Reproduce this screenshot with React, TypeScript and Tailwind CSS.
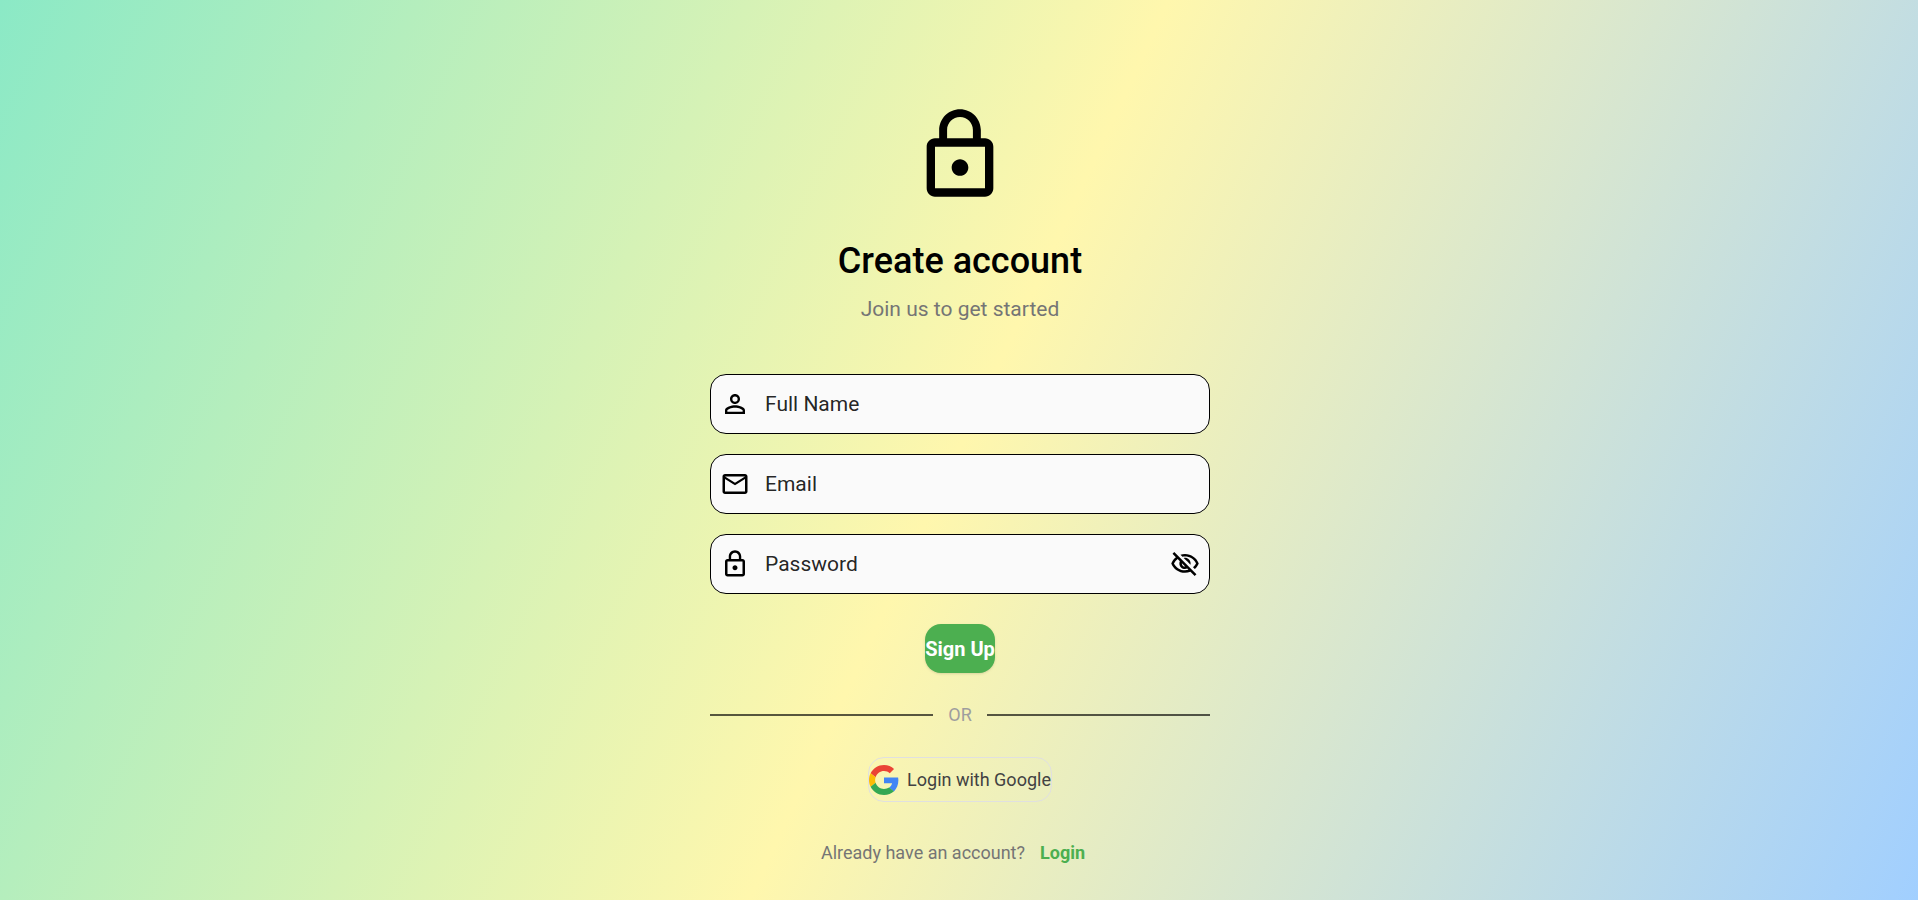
import { useState } from "react";
import type { ReactNode } from "react";

const PATHS = {
  lock: "M12 17c1.1 0 2-.9 2-2s-.9-2-2-2-2 .9-2 2 .9 2 2 2zm6-9h-1V6c0-2.76-2.24-5-5-5S7 3.24 7 6v2H6c-1.1 0-2 .9-2 2v10c0 1.1.9 2 2 2h12c1.1 0 2-.9 2-2V10c0-1.1-.9-2-2-2zM8.9 6c0-1.71 1.39-3.1 3.1-3.1s3.1 1.39 3.1 3.1v2H8.9V6zM18 20H6V10h12v10z",
  person:
    "M12 5.9a2.1 2.1 0 1 1 0 4.2 2.1 2.1 0 0 1 0-4.2m0 9c2.97 0 6.1 1.46 6.1 2.1v1.1H5.9V17c0-.64 3.13-2.1 6.1-2.1M12 4C9.79 4 8 5.79 8 8s1.79 4 4 4 4-1.79 4-4-1.79-4-4-4zm0 9c-2.67 0-8 1.34-8 4v3h16v-3c0-2.66-5.33-4-8-4z",
  mail: "M20 4H4c-1.1 0-1.99.9-1.99 2L2 18c0 1.1.9 2 2 2h16c1.1 0 2-.9 2-2V6c0-1.1-.9-2-2-2zm0 14H4V8l8 5 8-5v10zm-8-7L4 6h16l-8 5z",
  eye: "M12 4.5C7 4.5 2.73 7.61 1 12c1.73 4.39 6 7.5 11 7.5s9.27-3.11 11-7.5c-1.73-4.39-6-7.5-11-7.5zm0 13c-3.79 0-7.17-2.13-8.82-5.5C4.83 8.63 8.21 6.5 12 6.5s7.17 2.13 8.82 5.5c-1.65 3.37-5.03 5.5-8.82 5.5zm0-10c-2.48 0-4.5 2.02-4.5 4.5s2.02 4.5 4.5 4.5 4.5-2.02 4.5-4.5-2.02-4.5-4.5-4.5zm0 7c-1.38 0-2.5-1.12-2.5-2.5s1.12-2.5 2.5-2.5 2.5 1.12 2.5 2.5-1.12 2.5-2.5 2.5z",
  eyeOff:
    "M12 6c3.79 0 7.17 2.13 8.82 5.5-.59 1.22-1.42 2.27-2.41 3.12l1.41 1.41c1.39-1.23 2.49-2.77 3.18-4.53C21.27 7.11 17 4 12 4c-1.27 0-2.49.2-3.64.57l1.65 1.65C10.66 6.09 11.32 6 12 6zm-1.07 1.14L13 9.21c.57.25 1.03.71 1.28 1.28l2.07 2.07c.08-.34.14-.7.14-1.07C16.5 9.01 14.48 7 12 7c-.37 0-.72.05-1.07.14zM2.01 3.87l2.68 2.68C3.06 7.83 1.77 9.53 1 11.5 2.73 15.89 7 19 12 19c1.52 0 2.98-.29 4.32-.82l3.42 3.42 1.41-1.41L3.42 2.45 2.01 3.87zm7.5 7.5l2.61 2.61c-.04.01-.08.02-.12.02-1.38 0-2.5-1.12-2.5-2.5 0-.05.01-.08.01-.13zm-3.4-3.4l1.75 1.75c-.23.55-.36 1.15-.36 1.78 0 2.48 2.02 4.5 4.5 4.5.63 0 1.23-.13 1.77-.36l.98.98c-.88.24-1.8.38-2.75.38-3.79 0-7.17-2.13-8.82-5.5.7-1.43 1.72-2.61 2.93-3.53z",
};

type IconProps = { name: keyof typeof PATHS; className: string; label?: string };

function Icon({ name, className, label }: IconProps) {
  return (
    <svg
      viewBox="0 0 24 24"
      fill="currentColor"
      role={label ? "img" : undefined}
      aria-label={label}
      aria-hidden={label ? undefined : true}
      className={className}
    >
      <path d={PATHS[name]} />
    </svg>
  );
}

function GoogleIcon() {
  return (
    <svg viewBox="0 0 48 48" aria-hidden="true" className="size-[30px] shrink-0">
      <path fill="#EA4335" d="M24 9.5c3.54 0 6.71 1.22 9.21 3.6l6.85-6.85C35.9 2.38 30.47 0 24 0 14.62 0 6.51 5.38 2.56 13.22l7.98 6.19C12.43 13.72 17.74 9.5 24 9.5z" />
      <path fill="#4285F4" d="M46.98 24.55c0-1.57-.15-3.09-.38-4.55H24v9.02h12.94c-.58 2.96-2.26 5.48-4.78 7.18l7.73 6c4.51-4.18 7.09-10.36 7.09-17.65z" />
      <path fill="#FBBC05" d="M10.53 28.59c-.48-1.45-.76-2.99-.76-4.59s.27-3.14.76-4.59l-7.98-6.19C.92 16.46 0 20.12 0 24c0 3.88.92 7.54 2.56 10.78l7.97-6.19z" />
      <path fill="#34A853" d="M24 48c6.48 0 11.93-2.13 15.89-5.81l-7.73-6c-2.15 1.45-4.92 2.3-8.16 2.3-6.26 0-11.57-4.22-13.47-9.91l-7.98 6.19C6.51 42.62 14.62 48 24 48z" />
    </svg>
  );
}

type FieldProps = {
  id: string;
  label: string;
  type: string;
  icon: keyof typeof PATHS;
  children?: ReactNode;
};

function Field({ id, label, type, icon, children }: FieldProps) {
  return (
    <div className="flex h-[60px] items-center rounded-2xl border border-black bg-[#fafafa] px-[9px] text-black">
      <label htmlFor={id} className="shrink-0">
        <Icon name={icon} label={label} className="size-[30px]" />
      </label>
      <input
        id={id}
        name={id}
        type={type}
        placeholder={label}
        className="ml-[15px] h-full min-w-0 flex-1 bg-transparent text-[21px] text-black/87 outline-none placeholder:text-black/87"
      />
      {children}
    </div>
  );
}

export default function App() {
  const [visible, setVisible] = useState(false);

  return (
    <main className="flex min-h-screen flex-col items-center bg-[linear-gradient(115deg,#8be9c6_0%,#fff7ad_50%,#a1cfff_100%)] pt-[105px] pr-4 pb-8 pl-[18px] font-['Roboto',sans-serif]">
      <Icon name="lock" className="size-[100px] text-black" />
      <h1 className="mt-9 text-4xl font-medium text-black">Create account</h1>
      <p className="mt-3.5 text-[21px] leading-7 text-[#757575]">Join us to get started</p>

      <form className="mt-[51px] flex w-full max-w-[500px] flex-col gap-5" onSubmit={(e) => e.preventDefault()}>
        <Field id="name" label="Full Name" type="text" icon="person" />
        <Field id="email" label="Email" type="email" icon="mail" />
        <Field id="password" label="Password" type={visible ? "text" : "password"} icon="lock">
          <button
            type="button"
            aria-label={visible ? "Hide password" : "Show password"}
            className="shrink-0"
            onClick={() => setVisible(!visible)}
          >
            <Icon name={visible ? "eye" : "eyeOff"} className="size-[30px]" />
          </button>
        </Field>
        <button
          type="submit"
          className="mt-2.5 h-[49px] self-center rounded-2xl bg-[#4caf50] text-xl font-bold whitespace-nowrap text-white shadow-sm"
        >
          Sign Up
        </button>
      </form>

      <div className="mt-7 flex w-full max-w-[500px] items-center gap-[15px] text-lg text-[#9e9e9e]">
        <span className="h-0.5 flex-1 bg-black/65" />
        OR
        <span className="h-0.5 flex-1 bg-black/65" />
      </div>

      <button
        type="button"
        className="mt-7 flex h-[45px] items-center gap-2 rounded-2xl border border-[#e0e0e0] text-lg whitespace-nowrap text-[#424242]"
      >
        <GoogleIcon />
        Login with Google
      </button>

      <p className="mt-[37px] flex gap-[15px] pr-3.5 text-lg text-[#757575]">
        Already have an account?
        <a href="#login" className="font-bold text-[#4caf50]">
          Login
        </a>
      </p>
    </main>
  );
}
